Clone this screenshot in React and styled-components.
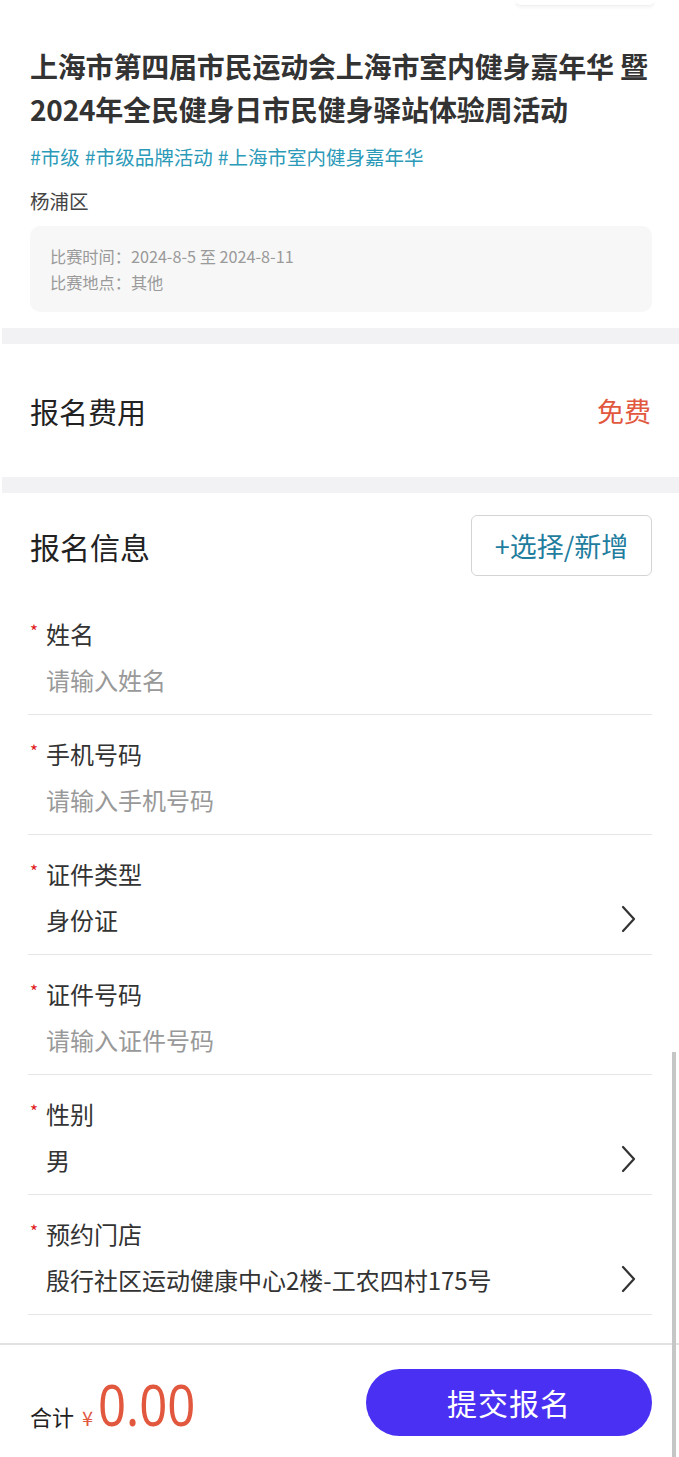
import React from 'react'
import styled, { createGlobalStyle } from 'styled-components'

const GlobalStyle = createGlobalStyle`
    html, body {
        margin: 0;
        padding: 0;
        background: #fff;
    }
    body {
        font-family: "Noto Sans CJK SC", "Noto Sans", sans-serif;
        color: #333;
    }
    * {
        box-sizing: border-box;
    }
`;

const Page = styled.div`
    position: relative;
    width: 679px;
    min-height: 1457px;
    background: #fff;
    overflow: hidden;
`;

const HeaderSection = styled.div`
    display: flex;
    flex-direction: column;
    padding: 0 28px 16px 30px;
`;

const StubRow = styled.div`
    display: flex;
    justify-content: flex-end;
    height: 6px;
`;

const Stub = styled.div`
    width: 140px;
    height: 6px;
    margin-right: -4px;
    border-radius: 0 0 12px 12px;
    border-bottom: 1px solid #f0f0f0;
    box-shadow: 0 2px 3px rgba(0, 0, 0, 0.04);
`;

const Title = styled.h1`
    margin: 39px 0 0;
    font-size: 28px;
    line-height: 43px;
    font-weight: 700;
    color: #333;
    white-space: nowrap;
    letter-spacing: -0.2px;
`;

const Tags = styled.div`
    display: flex;
    gap: 5px;
    margin-top: 12px;
    font-size: 19.5px;
    line-height: 28px;
    color: #2b9ab8;
`;

const District = styled.div`
    margin-top: 16px;
    font-size: 19.5px;
    line-height: 28px;
    color: #444;
`;

const InfoBox = styled.div`
    margin-top: 11px;
    padding: 17px 20px;
    background: #f7f7f7;
    border-radius: 10px;
    margin-right: -1px;
    font-size: 16.2px;
    line-height: 26px;
    color: #9a9a9a;
`;

const Gap = styled.div`
    height: 16px;
    background: #f2f2f4;
    margin-left: 2px;
`;

const FeeRow = styled.div`
    display: flex;
    justify-content: space-between;
    align-items: center;
    height: 133px;
    padding: 0 28px 0 30px;
    font-size: 29px;
    color: #222;
`;

const Free = styled.span`
    font-size: 27px;
    color: #e2583e;
`;

const RegSection = styled.div`
    display: flex;
    flex-direction: column;
    padding: 22px 27px 0 28px;
`;

const RegHeader = styled.div`
    display: flex;
    justify-content: space-between;
    align-items: center;
    margin-bottom: 19px;
    padding-left: 2px;
`;

const RegTitle = styled.div`
    font-size: 30px;
    color: #222;
`;

const PickButton = styled.div`
    display: flex;
    align-items: center;
    justify-content: center;
    width: 181px;
    height: 61px;
    border: 1.5px solid #d4d4d4;
    border-radius: 6px;
    font-size: 27px;
    color: #1f7d9e;
`;

const Field = styled.div`
    display: flex;
    flex-direction: column;
    padding: 22px 0 19px;
    border-bottom: 1px solid #e6e6e6;
`;

const Label = styled.div`
    display: flex;
    align-items: center;
    height: 32px;
    font-size: 24px;
    color: #333;
`;

const Star = styled.span`
    width: 18px;
    padding-left: 2px;
    font-size: 17px;
    color: #e02020;
    align-self: flex-start;
    line-height: 28px;
`;

const ValueRow = styled.div`
    display: flex;
    justify-content: space-between;
    align-items: center;
    height: 32px;
    margin-top: 14px;
    padding-left: 18px;
    padding-right: 14px;
    font-size: 24px;
    color: ${(p) => (p.$placeholder ? '#999' : '#333')};
`;

const Spacer = styled.div`
    height: 28px;
`;

const Footer = styled.div`
    display: flex;
    justify-content: space-between;
    align-items: center;
    height: 116px;
    padding: 0 27px 0 30px;
    border-top: 2px solid #e2e2e2;
`;

const Total = styled.div`
    display: flex;
    align-items: baseline;
    padding-top: 4px;
    color: #222;
    font-size: 22px;
`;

const Yen = styled.span`
    margin-left: 8px;
    font-size: 20px;
    color: #e2583e;
`;

const Amount = styled.span`
    display: inline-block;
    margin-left: 5px;
    font-family: "Noto Sans", Roboto, sans-serif;
    font-size: 57px;
    line-height: 1;
    color: #e2583e;
    transform: scaleX(0.86);
    transform-origin: left center;
`;

const SubmitButton = styled.div`
    display: flex;
    align-items: center;
    justify-content: center;
    width: 286px;
    height: 67px;
    border-radius: 34px;
    background: #4a30f3;
    color: #fff;
    font-size: 30px;
    letter-spacing: 1px;
`;

const ScrollThumb = styled.div`
    position: absolute;
    right: 3px;
    top: 1052px;
    bottom: 0;
    width: 4px;
    background: #c6c6c6;
`;

function Chevron() {
    return (
        <svg width="20" height="30" viewBox="0 0 20 30">
            <polyline points="5,3 16,15 5,27" fill="none" stroke="#333" strokeWidth="2.2" strokeLinecap="round" strokeLinejoin="round" />
        </svg>
    )
}

const fields = [
    { label: '姓名', value: '请输入姓名', placeholder: true },
    { label: '手机号码', value: '请输入手机号码', placeholder: true },
    { label: '证件类型', value: '身份证', arrow: true },
    { label: '证件号码', value: '请输入证件号码', placeholder: true },
    { label: '性别', value: '男', arrow: true },
    { label: '预约门店', value: '殷行社区运动健康中心2楼-工农四村175号', arrow: true },
];

export default function App() {
    return (
        <Page>
            <GlobalStyle />
            <HeaderSection>
                <StubRow>
                    <Stub />
                </StubRow>
                <Title>
                    上海市第四届市民运动会上海市室内健身嘉年华 暨
                    <br />
                    2024年全民健身日市民健身驿站体验周活动
                </Title>
                <Tags>
                    <span>#市级</span>
                    <span>#市级品牌活动</span>
                    <span>#上海市室内健身嘉年华</span>
                </Tags>
                <District>杨浦区</District>
                <InfoBox>
                    <div>比赛时间：2024-8-5 至 2024-8-11</div>
                    <div>比赛地点：其他</div>
                </InfoBox>
            </HeaderSection>
            <Gap />
            <FeeRow>
                <span>报名费用</span>
                <Free>免费</Free>
            </FeeRow>
            <Gap />
            <RegSection>
                <RegHeader>
                    <RegTitle>报名信息</RegTitle>
                    <PickButton>+选择/新增</PickButton>
                </RegHeader>
                {fields.map((f) => (
                    <Field key={f.label}>
                        <Label>
                            <Star>*</Star>
                            {f.label}
                        </Label>
                        <ValueRow $placeholder={f.placeholder}>
                            <span>{f.value}</span>
                            {f.arrow && <Chevron />}
                        </ValueRow>
                    </Field>
                ))}
            </RegSection>
            <Spacer />
            <Footer>
                <Total>
                    合计
                    <Yen>¥</Yen>
                    <Amount>0.00</Amount>
                </Total>
                <SubmitButton>提交报名</SubmitButton>
            </Footer>
            <ScrollThumb />
        </Page>
    )
}
